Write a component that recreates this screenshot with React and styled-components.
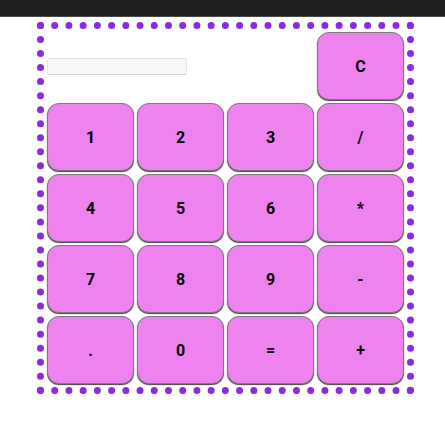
import styled, { createGlobalStyle } from 'styled-components';

const GlobalStyle = createGlobalStyle`
  body {
    margin: 0;
    background: #fff;
    font-family: Roboto, "Liberation Sans", Arial, sans-serif;
  }
`;

const TopBar = styled.div`
  height: 16px;
  background: #1f1f1f;
  border-bottom: 1px solid #4a4a4a;
`;

const Page = styled.main`
  padding: 5px 0 0 37px;
`;

const Calculator = styled.div`
  display: grid;
  grid-template-columns: repeat(4, 87px);
  grid-auto-rows: 68px;
  gap: 3px;
  width: max-content;
  padding: 3px 3px 3px 3px;
  border: 7px dotted blueviolet;
`;

const Display = styled.input`
  grid-column: 1 / span 3;
  justify-self: start;
  align-self: center;
  box-sizing: border-box;
  width: 140px;
  height: 17px;
  margin: 0;
  padding: 0 4px;
  background: #f7f7f7;
  border: 1px solid #e2e2e2;
  border-bottom-color: #d4d4d4;
  border-radius: 2px;
  outline: none;
`;

const Key = styled.button`
  box-sizing: border-box;
  width: 100%;
  height: 100%;
  margin: 0;
  padding: 0;
  background: violet;
  color: #000;
  font-family: Roboto, "Liberation Sans", Arial, sans-serif;
  font-size: 16px;
  font-weight: bold;
  border: 1px solid #7a7a7a;
  border-radius: 12px;
  box-shadow: 0 1px 1px rgba(0, 0, 0, 0.75);
  cursor: pointer;
`;

const keys = ['1', '2', '3', '/', '4', '5', '6', '*', '7', '8', '9', '-', '.', '0', '=', '+'];

export default function App() {
  return (
    <>
      <GlobalStyle />
      <TopBar />
      <Page>
        <Calculator>
          <Display readOnly />
          <Key>C</Key>
          {keys.map((k) => (
            <Key key={k}>{k}</Key>
          ))}
        </Calculator>
      </Page>
    </>
  );
}
